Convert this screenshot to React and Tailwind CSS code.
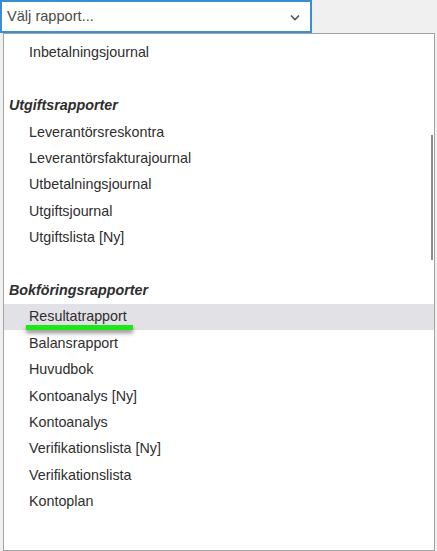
export default function App() {
  const groups = [
    { items: ["Inbetalningsjournal"] },
    {
      title: "Utgiftsrapporter",
      items: [
        "Leverantörsreskontra",
        "Leverantörsfakturajournal",
        "Utbetalningsjournal",
        "Utgiftsjournal",
        "Utgiftslista [Ny]",
      ],
    },
    {
      title: "Bokföringsrapporter",
      items: [
        "Resultatrapport",
        "Balansrapport",
        "Huvudbok",
        "Kontoanalys [Ny]",
        "Kontoanalys",
        "Verifikationslista [Ny]",
        "Verifikationslista",
        "Kontoplan",
      ],
    },
  ];

  return (
    <div className="w-[437px] h-[551px] overflow-hidden bg-[#f0f0f0] font-['Liberation_Sans',Arial,sans-serif]">
      {/* Select */}
      <div className="w-[312px] h-[33px] border-2 border-[#3a8ed6] bg-white flex items-center justify-between pl-[5px] pr-[10px]">
        <span className="text-[14.6px] text-[#4a4a4a]">Välj rapport...</span>
        <svg width="10" height="7" viewBox="0 0 10 7" className="mt-[1px]">
          <path d="M1 1.5 L5 5.5 L9 1.5" fill="none" stroke="#555" strokeWidth="1.6" />
        </svg>
      </div>

      {/* Dropdown list */}
      <div className="relative ml-[3px] w-[432px] h-[518px] border border-[#a3a3a3] bg-white pt-[6px] text-[14.3px] text-[#2e2e2e]">
        {groups.map((g, gi) => (
          <div key={gi}>
            {gi > 0 && <div className="h-[26.4px]" />}
            {g.title && (
              <div className="h-[26.4px] flex items-center pl-[5px] font-bold italic">
                {g.title}
              </div>
            )}
            {g.items.map((item) => {
              const active = item === "Resultatrapport";
              return (
                <div
                  key={item}
                  className={
                    active
                      ? "relative h-[26.4px] flex items-center pl-[25px] bg-[#e1e1e6]"
                      : "h-[26.4px] flex items-center pl-[25px]"
                  }
                >
                  {item}
                  {active && (
                    <div className="absolute left-[22px] top-[21px] w-[107px] h-[5px] bg-[#1ee61a] shadow-[0_3px_4px_rgba(0,0,0,0.45)]" />
                  )}
                </div>
              );
            })}
          </div>
        ))}

        {/* scrollbar thumb */}
        <div className="absolute right-[1px] top-[101px] w-[2px] h-[125px] bg-[#8c8c8c]" />
      </div>
    </div>
  );
}
